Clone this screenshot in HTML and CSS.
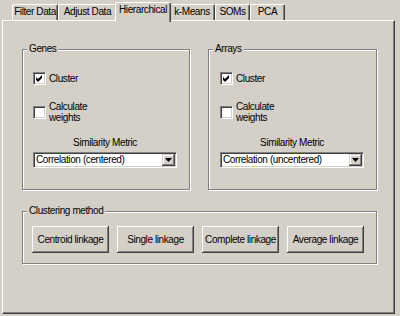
FILE: index.html
```html
<!DOCTYPE html>
<html>
<head>
  <title>Hierarchical</title>
  <link rel="stylesheet" href="styles.css">
</head>
<body>
  <div class="window">
    <div class="tabs">
      <div class="tab">Filter Data</div>
      <div class="tab">Adjust Data</div>
      <div class="tab active">Hierarchical</div>
      <div class="tab">k-Means</div>
      <div class="tab">SOMs</div>
      <div class="tab">PCA</div>
    </div>

    <div class="panel">
      <div class="row">
        <div class="group genes">
          <span class="legend">Genes</span>
          <label class="check">
            <span class="box"><svg width="7" height="7" viewBox="0 0 7 7"><polygon points="0,2 2,4 6,0 6,3 2,7 0,5" fill="#000"/></svg></span>
            <span>Cluster</span>
          </label>
          <label class="check double">
            <span class="box"></span>
            <span>Calculate<br>weights</span>
          </label>
          <div class="metric">Similarity Metric</div>
          <div class="combo">
            <span class="value">Correlation (centered)</span>
            <span class="drop"><svg width="7" height="4" viewBox="0 0 7 4"><polygon points="0,0 7,0 3.5,4" fill="#000"/></svg></span>
          </div>
        </div>

        <div class="group arrays">
          <span class="legend">Arrays</span>
          <label class="check">
            <span class="box"><svg width="7" height="7" viewBox="0 0 7 7"><polygon points="0,2 2,4 6,0 6,3 2,7 0,5" fill="#000"/></svg></span>
            <span>Cluster</span>
          </label>
          <label class="check double">
            <span class="box"></span>
            <span>Calculate<br>weights</span>
          </label>
          <div class="metric">Similarity Metric</div>
          <div class="combo">
            <span class="value">Correlation (uncentered)</span>
            <span class="drop"><svg width="7" height="4" viewBox="0 0 7 4"><polygon points="0,0 7,0 3.5,4" fill="#000"/></svg></span>
          </div>
        </div>
      </div>

      <div class="group method">
        <span class="legend">Clustering method</span>
        <div class="buttons">
          <button>Centroid linkage</button>
          <button>Single linkage</button>
          <button>Complete linkage</button>
          <button>Average linkage</button>
        </div>
      </div>
    </div>
  </div>
</body>
</html>
```

FILE: styles.css
```css
body { margin: 0; background: #d4d0c8; color: #000; font: 10px "Liberation Sans", Arial, sans-serif; letter-spacing: -0.4px; }
.window { width: 400px; height: 316px; padding: 2px 0 0 2px; box-sizing: border-box; }

/* tab strip */
.tabs { display: grid; grid-template-columns: 46px 59px 52px 46px 35px 35px; height: 18px; padding-left: 10px; align-items: end; }
.tab { height: 16px; box-sizing: border-box; line-height: 14px; text-align: center; white-space: nowrap; border-top: 1px solid #fff; border-left: 1px solid #fff; border-right: 1px solid #404040; box-shadow: inset -1px 0 #808080; border-radius: 2px 2px 0 0; }
.tab.active { height: 20px; margin: 0 -2px -2px; line-height: 13px; background: #d4d0c8; position: relative; z-index: 1; padding-bottom: 4px; }

.panel { width: 393px; height: 294px; box-sizing: border-box; padding: 28px 0 0 19px; border: 1px solid #404040; border-top-color: #fff; border-left-color: #fff; box-shadow: inset -1px -1px #808080; }
.row { display: flex; gap: 18px; }

/* group boxes */
.group { position: relative; box-sizing: border-box; border: 1px solid #808080; box-shadow: 1px 1px 0 #fff, inset 1px 1px 0 #fff; }
.genes { width: 168px; height: 141px; padding: 0 12px 0 10px; }
.arrays { width: 169px; height: 141px; padding: 0 12px 0 11px; }
.method { width: 355px; height: 53px; margin-top: 21px; padding: 14px 0 0 9px; }
.legend { position: absolute; top: -7px; left: 4px; padding: 0 2px; background: #d4d0c8; line-height: 12px; }

.check { display: flex; align-items: center; gap: 3px; height: 13px; margin-top: 22px; }
.check.double { height: 22px; margin-top: 16px; line-height: 11px; }
.box { width: 13px; height: 13px; box-sizing: border-box; display: flex; align-items: center; justify-content: center; background: #fff; border: 1px solid #fff; border-top-color: #808080; border-left-color: #808080; box-shadow: inset 1px 1px #404040, inset -1px -1px #d4d0c8; flex: none; }

.metric { text-align: center; line-height: 12px; margin-top: 14px; }
.combo { display: flex; align-items: stretch; height: 16px; margin-top: 3px; box-sizing: border-box; padding: 1px; background: #fff; border: 1px solid #fff; border-top-color: #808080; border-left-color: #808080; box-shadow: inset 1px 1px #404040, inset -1px -1px #d4d0c8; }
.combo .value { flex: 1; line-height: 12px; padding-left: 1px; white-space: nowrap; }
.drop { width: 13px; display: flex; align-items: center; justify-content: center; background: #d4d0c8; box-shadow: inset -1px -1px #404040, inset 1px 1px #d4d0c8, inset -2px -2px #808080, inset 2px 2px #fff; }

/* buttons */
.buttons { display: flex; gap: 8px; }
button { width: 77px; height: 27px; padding: 0; font: inherit; letter-spacing: inherit; color: #000; background: #d4d0c8; border: none; box-shadow: inset -1px -1px #404040, inset 1px 1px #fff, inset -2px -2px #808080, inset 2px 2px #d4d0c8; }
```
